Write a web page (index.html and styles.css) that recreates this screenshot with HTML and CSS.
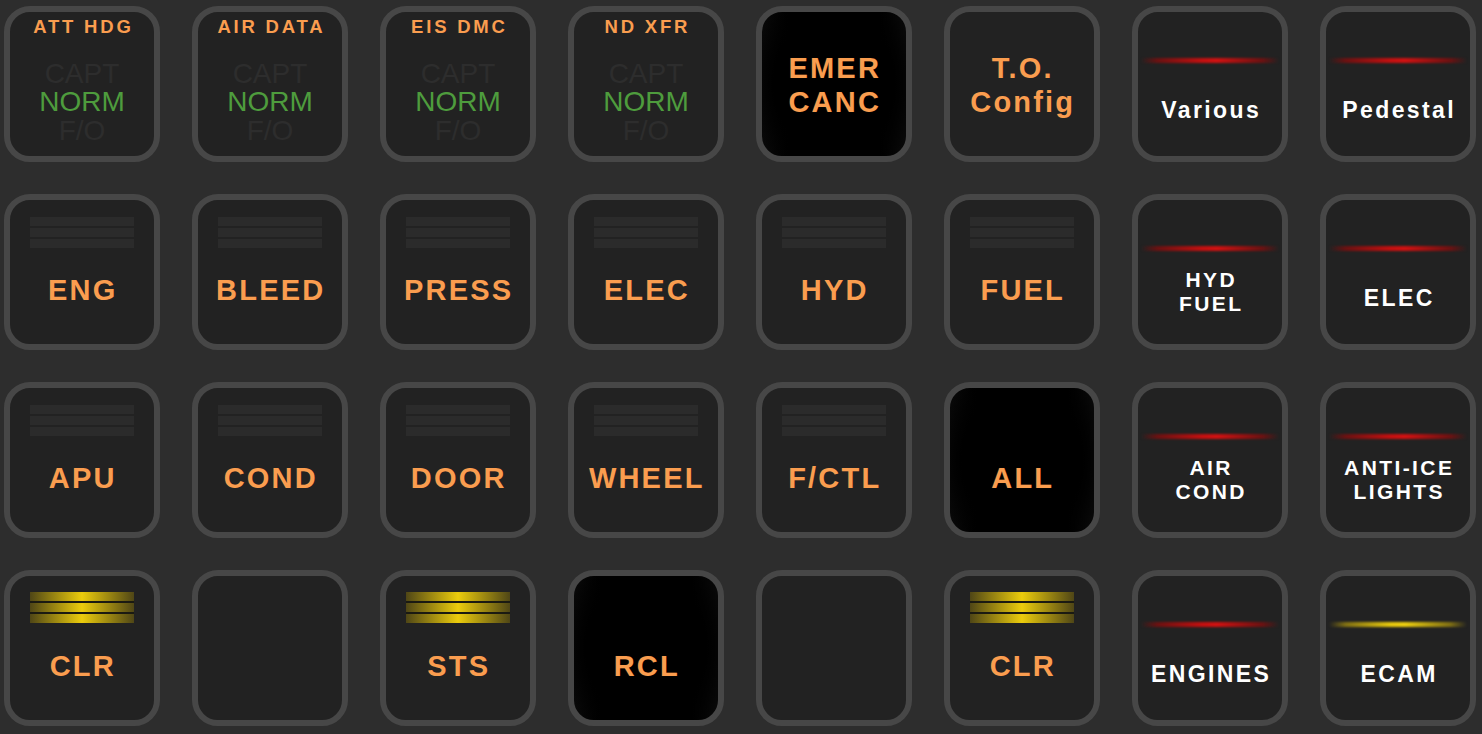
FILE: index.html
```html
<!DOCTYPE html>
<html>
<head>
<meta charset="utf-8">
<link rel="stylesheet" href="styles.css">
</head>
<body>
<div class="panel">
  <div class="btn sel"><div class="hdr">ATT HDG</div><div class="stack"><span class="dim">CAPT</span><span class="norm">NORM</span><span class="dim">F/O</span></div></div>
  <div class="btn sel"><div class="hdr">AIR DATA</div><div class="stack"><span class="dim">CAPT</span><span class="norm">NORM</span><span class="dim">F/O</span></div></div>
  <div class="btn sel"><div class="hdr">EIS DMC</div><div class="stack"><span class="dim">CAPT</span><span class="norm">NORM</span><span class="dim">F/O</span></div></div>
  <div class="btn sel"><div class="hdr">ND XFR</div><div class="stack"><span class="dim">CAPT</span><span class="norm">NORM</span><span class="dim">F/O</span></div></div>
  <div class="btn dark"><div class="lbl">EMER<br>CANC</div></div>
  <div class="btn"><div class="lbl">T.O.<br>Config</div></div>
  <div class="btn page"><div class="line red"></div><div class="plbl"><span>Various</span></div></div>
  <div class="btn page"><div class="line red"></div><div class="plbl"><span>Pedestal</span></div></div>

  <div class="btn"><div class="bars"><i></i><i></i><i></i></div><div class="lbl">ENG</div></div>
  <div class="btn"><div class="bars"><i></i><i></i><i></i></div><div class="lbl">BLEED</div></div>
  <div class="btn"><div class="bars"><i></i><i></i><i></i></div><div class="lbl">PRESS</div></div>
  <div class="btn"><div class="bars"><i></i><i></i><i></i></div><div class="lbl">ELEC</div></div>
  <div class="btn"><div class="bars"><i></i><i></i><i></i></div><div class="lbl">HYD</div></div>
  <div class="btn"><div class="bars"><i></i><i></i><i></i></div><div class="lbl">FUEL</div></div>
  <div class="btn page"><div class="line red"></div><div class="plbl two"><span>HYD<br>FUEL</span></div></div>
  <div class="btn page"><div class="line red"></div><div class="plbl"><span>ELEC</span></div></div>

  <div class="btn"><div class="bars"><i></i><i></i><i></i></div><div class="lbl">APU</div></div>
  <div class="btn"><div class="bars"><i></i><i></i><i></i></div><div class="lbl">COND</div></div>
  <div class="btn"><div class="bars"><i></i><i></i><i></i></div><div class="lbl">DOOR</div></div>
  <div class="btn"><div class="bars"><i></i><i></i><i></i></div><div class="lbl">WHEEL</div></div>
  <div class="btn"><div class="bars"><i></i><i></i><i></i></div><div class="lbl">F/CTL</div></div>
  <div class="btn dark"><div class="lbl">ALL</div></div>
  <div class="btn page"><div class="line red"></div><div class="plbl two"><span>AIR<br>COND</span></div></div>
  <div class="btn page"><div class="line red"></div><div class="plbl two"><span>ANTI-ICE<br>LIGHTS</span></div></div>

  <div class="btn"><div class="bars lit"><i></i><i></i><i></i></div><div class="lbl">CLR</div></div>
  <div class="btn"></div>
  <div class="btn"><div class="bars lit"><i></i><i></i><i></i></div><div class="lbl">STS</div></div>
  <div class="btn dark"><div class="lbl">RCL</div></div>
  <div class="btn"></div>
  <div class="btn"><div class="bars lit"><i></i><i></i><i></i></div><div class="lbl">CLR</div></div>
  <div class="btn page"><div class="line red"></div><div class="plbl"><span>ENGINES</span></div></div>
  <div class="btn page"><div class="line yellow"></div><div class="plbl"><span>ECAM</span></div></div>
</div>
</body>
</html>
```

FILE: styles.css
```css
html, body {
  margin: 0;
  padding: 0;
  background: #2d2d2d;
  height: 100%;
  overflow: hidden;
}

.panel {
  display: grid;
  grid-template-columns: repeat(8, 156px);
  grid-auto-rows: 156px;
  column-gap: 32px;
  row-gap: 32px;
  padding: 6px 0 0 4px;
  font-family: "Liberation Sans", Arial, sans-serif;
}

.btn {
  box-sizing: border-box;
  border: 6px solid #474747;
  border-radius: 26px;
  background: #222222;
  display: flex;
  flex-direction: column;
  align-items: center;
  overflow: hidden;
}

.btn.dark {
  background:
    radial-gradient(ellipse 70% 80% at 50% 50%, #000 60%, rgba(0,0,0,0) 100%),
    linear-gradient(90deg, #0d0d0d 0%, #000 18%, #000 82%, #0d0d0d 100%);
}

/* orange labels */
.lbl {
  margin-top: auto;
  margin-bottom: 37px;
  color: #fa9d4f;
  font-weight: bold;
  font-size: 29px;
  line-height: 34px;
  letter-spacing: 2.2px;
  text-align: center;
  padding-left: 1.5px;
}

.dark .lbl {
  text-shadow: 0 0 2px rgba(0,0,0,0.9), 0 0 1px #3a2410;
}

/* indicator bars */
.bars {
  margin-top: 17px;
  width: 104px;
  display: flex;
  flex-direction: column;
  gap: 2px;
}

.bars i {
  display: block;
  height: 9px;
  background: #2b2b2b;
}

.bars.lit {
  margin-top: 16px;
  gap: 2px;
  background: #1a1a12;
}

.bars.lit i {
  background: linear-gradient(90deg, #4f4616 0%, #8e7c12 20%, #eccc0c 50%, #8e7c12 80%, #4f4616 100%);
}

/* selector buttons (top row) */
.hdr {
  padding-top: 5px;
  color: #fa9d4f;
  font-weight: bold;
  font-size: 18.5px;
  line-height: 20px;
  letter-spacing: 2.8px;
  padding-left: 2.8px;
}

.stack {
  margin-top: auto;
  margin-bottom: 11px;
  display: flex;
  flex-direction: column;
  align-items: center;
  font-size: 28px;
  line-height: 28.5px;
}

.dim {
  color: #2d2d2d;
}

.norm {
  color: #4e9c3d;
}

/* page buttons (right columns) */
.line {
  margin-top: 46px;
  width: 138px;
  height: 5px;
  border-radius: 3px;
  filter: blur(0.9px);
}

.line.red {
  background: linear-gradient(90deg, rgba(120,10,10,0) 0%, #6a1212 12%, #c41010 45%, #d01212 55%, #6a1212 88%, rgba(120,10,10,0) 100%);
}

.line.yellow {
  background: linear-gradient(90deg, rgba(120,100,10,0) 0%, #7e6e14 12%, #e6c80e 45%, #ecce10 55%, #7e6e14 88%, rgba(120,100,10,0) 100%);
}

.plbl {
  flex: 1;
  display: flex;
  align-items: center;
  justify-content: center;
  color: #ffffff;
  font-weight: bold;
  font-size: 23px;
  line-height: 24px;
  letter-spacing: 2.4px;
  text-align: center;
}

.plbl span {
  padding-left: 2.4px;
}

.plbl.two {
  font-size: 21px;
  letter-spacing: 2.4px;
  padding-bottom: 11px;
}
```
